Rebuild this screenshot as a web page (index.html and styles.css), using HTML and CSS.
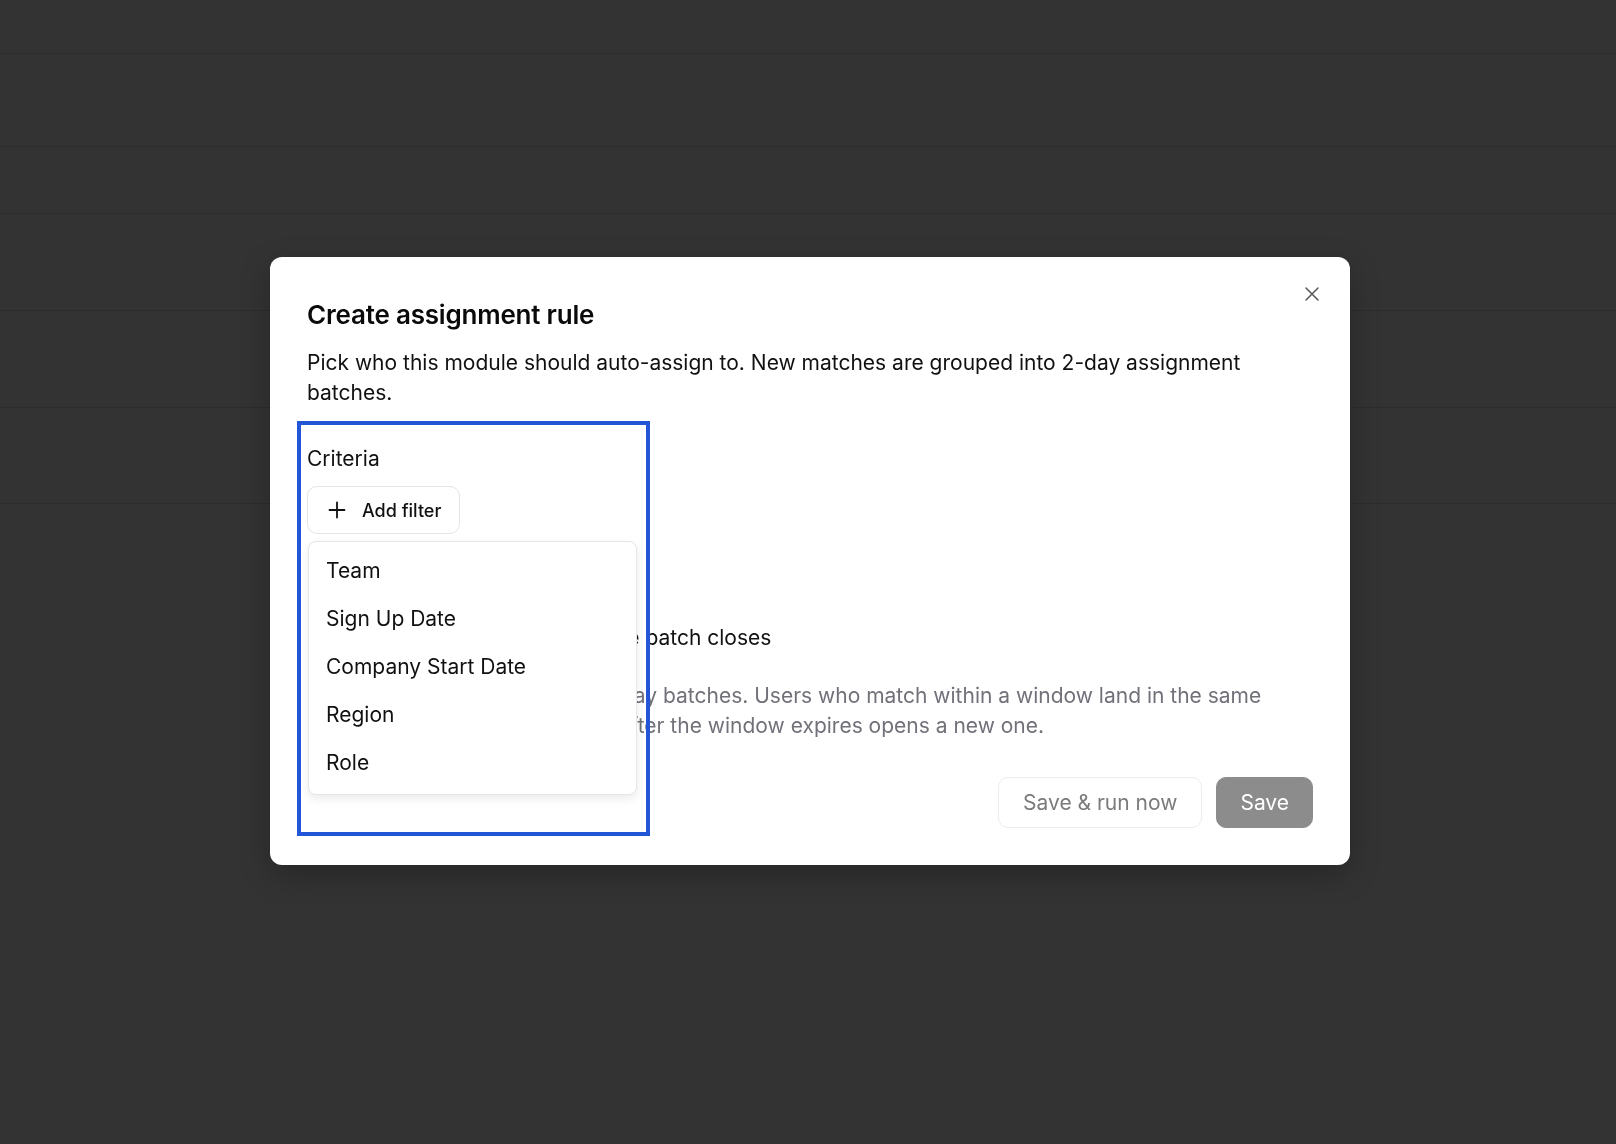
FILE: index.html
```html
<!DOCTYPE html>
<html>
<head>
    <link rel="stylesheet" href="styles.css">
</head>
<body>
    <div class="page-rows">
        <div class="row row-head"></div>
        <div class="row row-a"></div>
        <div class="row row-b"></div>
        <div class="row row-c"></div>
        <div class="row row-c"></div>
        <div class="row row-d"></div>
    </div>

    <div class="overlay">
        <div class="modal">
            <button class="close-btn" aria-label="Close">
                <svg width="16" height="16" viewBox="0 0 16 16" fill="none" stroke="#555" stroke-width="1.5" stroke-linecap="round">
                    <path d="M2 2 L14 14 M14 2 L2 14"/>
                </svg>
            </button>

            <h2 class="modal-title">Create assignment rule</h2>
            <p class="modal-desc">Pick who this module should auto-assign to. New matches are grouped into 2-day assignment batches.</p>

            <div class="criteria">
                <div class="section-label">Criteria</div>
                <button class="add-filter">
                    <svg width="18" height="18" viewBox="0 0 18 18" fill="none" stroke="#111" stroke-width="1.8" stroke-linecap="round">
                        <path d="M9 1.5 V16.5 M1.5 9 H16.5"/>
                    </svg>
                    <span>Add filter</span>
                </button>
            </div>

            <label class="check-row">
                <span class="toggle"><span class="toggle-knob"></span></span>
                <span>Only start assigning once the batch closes</span>
            </label>

            <p class="help-text">New matches are grouped in 2-day batches. Users who match within a window land in the same batch, but a user who matches after the window expires opens a new one.</p>

            <div class="modal-footer">
                <button class="btn btn-outline">Save &amp; run now</button>
                <button class="btn btn-primary">Save</button>
            </div>

            <!-- filter menu opened from "Add filter" -->
            <ul class="filter-menu">
                <li>Team</li>
                <li>Sign Up Date</li>
                <li>Company Start Date</li>
                <li>Region</li>
                <li>Role</li>
            </ul>

            <div class="highlight-box"></div>
        </div>
    </div>
</body>
</html>
```

FILE: styles.css
```css
* {
    box-sizing: border-box;
}

body {
    margin: 0;
    height: 1144px;
    overflow: hidden;
    background: #333333;
    font-family: Inter, "Noto Sans", sans-serif;
    color: #111;
}

/* dimmed page behind the dialog */
.page-rows .row {
    border-bottom: 1px solid #2c2c2c;
}

.row-head { height: 54px; }
.row-a { height: 93px; }
.row-b { height: 67px; }
.row-c { height: 97px; }
.row-d { height: 96px; }

.overlay {
    position: fixed;
    inset: 0;
    display: flex;
    align-items: center;
    justify-content: center;
    padding: 0 0 22px 4px;
}

.modal {
    position: relative;
    width: 1080px;
    background: #fff;
    border-radius: 12px;
    padding: 42px 37px 37px;
    box-shadow: 0 10px 30px rgba(0, 0, 0, 0.25);
}

.close-btn {
    position: absolute;
    top: 29px;
    right: 30px;
    width: 16px;
    height: 16px;
    padding: 0;
    border: 0;
    background: none;
    display: flex;
}

.modal-title {
    margin: 0;
    font-size: 26px;
    line-height: 32px;
    font-weight: 600;
    letter-spacing: -0.2px;
    color: #0a0a0a;
}

.modal-desc {
    margin: 17px 0 0;
    font-size: 21px;
    line-height: 30px;
    padding-right: 60px;
}

.criteria {
    margin-top: 36px;
}

.section-label {
    font-size: 21px;
    line-height: 30px;
}

.add-filter {
    margin-top: 12px;
    height: 48px;
    display: flex;
    align-items: center;
    gap: 16px;
    padding: 0 18px 0 20px;
    border: 1px solid #e4e4e4;
    border-radius: 10px;
    background: #fff;
    font-family: inherit;
    font-size: 18px;
    font-weight: 500;
    color: #111;
}

.check-row {
    margin-top: 89px;
    display: flex;
    align-items: center;
    gap: 11px;
    font-size: 21px;
    line-height: 30px;
}

.toggle {
    margin-left: 4px;
    width: 28px;
    height: 16px;
    border-radius: 8px;
    background: #e4e4e7;
    padding: 2px;
}

.toggle-knob {
    display: block;
    width: 12px;
    height: 12px;
    border-radius: 50%;
    background: #fff;
}

.help-text {
    margin: 28px 0 0;
    font-size: 21px;
    line-height: 30px;
    color: #71717a;
    padding-right: 36px;
}

.modal-footer {
    margin-top: 36px;
    display: flex;
    justify-content: flex-end;
    gap: 14px;
}

.btn {
    height: 51px;
    padding: 0 24px;
    border-radius: 10px;
    font-family: inherit;
    font-size: 21px;
}

.btn-outline {
    background: #fff;
    border: 1px solid #ececec;
    color: #7b7b7b;
}

.btn-primary {
    padding: 0 23px;
    background: #8c8c8c;
    border: 1px solid #8c8c8c;
    color: #fff;
}

.filter-menu {
    position: absolute;
    left: 38px;
    top: 284px;
    width: 329px;
    margin: 0;
    padding: 5px 0 7px;
    list-style: none;
    background: #fff;
    border: 1px solid #e6e6e6;
    border-radius: 8px;
    box-shadow: 0 4px 10px rgba(0, 0, 0, 0.08);
}

.filter-menu li {
    height: 48px;
    line-height: 48px;
    padding: 0 17px;
    font-size: 21px;
    color: #111;
}

/* annotation frame round the criteria block */
.highlight-box {
    position: absolute;
    left: 27px;
    top: 164px;
    width: 353px;
    height: 415px;
    border: 4px solid #2356d6;
    pointer-events: none;
}
```
